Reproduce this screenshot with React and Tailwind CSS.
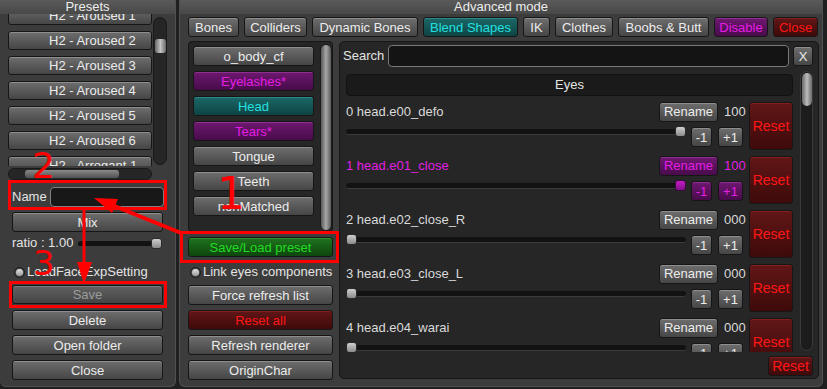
import React from 'react';

const tones = {
  gray: 'from-[#6e6e6e] to-[#464646] text-[#ececec] shadow-[inset_0_1px_0_#8e8e8e]',
  dim: 'from-[#626262] to-[#444444] text-[#9c9c9c] shadow-[inset_0_1px_0_#7c7c7c]',
  purple: 'from-[#6e1870] to-[#480c4a] text-[#e41ee4] shadow-[inset_0_1px_0_#8e3090]',
  teal: 'from-[#1c6868] to-[#0e4444] text-[#22e0e0] shadow-[inset_0_1px_0_#2e8888]',
  green: 'from-[#1e741e] to-[#0e460e] text-[#22dc22] shadow-[inset_0_1px_0_#2e942e]',
  red: 'from-[#621616] to-[#3e0a0a] text-[#ff1616] shadow-[inset_0_1px_0_#842020]',
};

function Btn({ children, tone = 'gray', className = '' }) {
  return (
    <div
      className={`flex items-center justify-center shrink-0 rounded-[3px] border border-[#161616] bg-linear-to-b leading-none whitespace-nowrap ${tones[tone]} ${className}`}
    >
      {children}
    </div>
  );
}

function Toggle({ label, className = '' }) {
  return (
    <div className={`flex items-center text-[#e4e4e4] ${className}`}>
      <div className="w-[11px] h-[11px] rounded-full border border-[#1a1a1a] bg-[#4a4a4a] flex items-center justify-center mr-[2px]">
        <div className="w-[7px] h-[7px] rounded-full bg-linear-to-b from-[#e4e4e4] to-[#9a9a9a]" />
      </div>
      <span>{label}</span>
    </div>
  );
}

function Slider({ value, tone = 'gray', className = '' }) {
  const thumb = tone === 'purple'
    ? 'from-[#c21ec4] to-[#86108a] border-[#3a0a3a]'
    : 'from-[#cfcfcf] to-[#8a8a8a] border-[#2a2a2a]';
  return (
    <div className={`relative h-[11px] ${className}`}>
      <div className="absolute left-0 right-0 top-[3px] h-[6px] rounded-full bg-[#121212] border-b border-[#3c3c3c]" />
      <div
        className={`absolute top-0 w-[11px] h-[11px] rounded-[3px] border bg-linear-to-b ${thumb}`}
        style={{ left: value ? 'calc(100% - 11px)' : 0 }}
      />
    </div>
  );
}

const presets = [
  'H2 - Aroused 1',
  'H2 - Aroused 2',
  'H2 - Aroused 3',
  'H2 - Aroused 4',
  'H2 - Aroused 5',
  'H2 - Aroused 6',
  'H2 - Arrogant 1',
];

function PresetsWindow() {
  return (
    <div className="w-[176px] h-[387px] shrink-0 bg-[#3c3c3c] rounded-b-[6px] border-r border-b border-[#505050] flex flex-col">
      <div className="h-[14px] leading-[14px] text-center text-[#ececec] bg-linear-to-b from-[#5a5a5a] to-[#484848]">Presets</div>

      {/* preset list */}
      <div className="h-[152px] flex pl-[8px] gap-[1px]">
        <div className="w-[144px] overflow-hidden">
          <div className="mt-[-8px] flex flex-col gap-[6px]">
            {presets.map((p) => (
              <Btn key={p} className="h-[19px] justify-start pl-[40px]">{p}</Btn>
            ))}
          </div>
        </div>
        <div className="w-[14px] h-[148px] mt-[3px] rounded-full bg-[#262626] border border-[#1a1a1a] pt-[21px] flex justify-center">
          <div className="w-[11px] h-[14px] rounded-[3px] bg-linear-to-r from-[#6a6a6a] via-[#c4c4c4] to-[#6a6a6a]" />
        </div>
      </div>

      {/* horizontal scrollbar */}
      <div className="mt-[2px] ml-[8px] w-[144px] h-[12px] rounded-full bg-[#262626] border border-[#1a1a1a] flex items-center pl-[16px]">
        <div className="w-[94px] h-[8px] rounded-[3px] bg-linear-to-b from-[#8a8a8a] to-[#505050]" />
      </div>

      <div className="mt-[7px] h-[20px] flex items-center pl-[12px]">
        <span className="w-[38px] text-[#e4e4e4]">Name</span>
        <div className="w-[114px] h-[20px] rounded-[4px] bg-[#181818] border border-[#808080]" />
      </div>

      <Btn className="mt-[5px] mx-[12px] h-[20px]">Mix</Btn>

      <div className="mt-[4px] h-[14px] flex items-center pl-[12px] pr-[13px] text-[#e4e4e4]">
        <span className="w-[66px]">ratio : 1.00</span>
        <Slider value={1} className="flex-1" />
      </div>

      <Toggle label="LoadFaceExpSetting" className="mt-[14px] h-[16px] pl-[14px]" />

      <Btn tone="dim" className="mt-[5px] mx-[12px] h-[19px]">Save</Btn>
      <Btn className="mt-[6px] mx-[12px] h-[20px]">Delete</Btn>
      <Btn className="mt-[5px] mx-[12px] h-[20px]">Open folder</Btn>
      <Btn className="mt-[5px] mx-[12px] h-[20px]">Close</Btn>
    </div>
  );
}

const tabs = [
  { label: 'Bones', w: 'w-[51px]' },
  { label: 'Colliders', w: 'w-[63px]' },
  { label: 'Dynamic Bones', w: 'w-[106px]' },
  { label: 'Blend Shapes', w: 'w-[95px]', tone: 'teal' },
  { label: 'IK', w: 'w-[27px]' },
  { label: 'Clothes', w: 'w-[58px]' },
  { label: 'Boobs & Butt', w: 'w-[91px]' },
  { label: 'Disable', w: 'w-[54px]', tone: 'purple' },
  { label: 'Close', w: 'w-[45px]', tone: 'red' },
];

const renderers = [
  { label: 'o_body_cf' },
  { label: 'Eyelashes*', tone: 'purple' },
  { label: 'Head', tone: 'teal' },
  { label: 'Tears*', tone: 'purple' },
  { label: 'Tongue' },
  { label: 'Teeth' },
  { label: 'nonMatched' },
];

const shapes = [
  { name: '0 head.e00_defo', value: '100', on: true },
  { name: '1 head.e01_close', value: '100', on: true, active: true },
  { name: '2 head.e02_close_R', value: '000' },
  { name: '3 head.e03_close_L', value: '000' },
  { name: '4 head.e04_warai', value: '000' },
];

function ShapeRow({ shape }) {
  const tone = shape.active ? 'purple' : 'gray';
  const text = shape.active ? 'text-[#e21ee2]' : 'text-[#dadada]';
  return (
    <div className="h-[48px] flex gap-[6px] shrink-0">
      <div className="w-[397px] flex flex-col">
        <div className="h-[19px] flex items-center">
          <span className={`flex-1 ${text}`}>{shape.name}</span>
          <Btn tone={tone} className="w-[59px] h-[20px]">Rename</Btn>
          <span className={`ml-[6px] w-[19px] ${text}`}>{shape.value}</span>
        </div>
        <div className="mt-[5px] flex items-start">
          <Slider value={shape.on ? 1 : 0} tone={tone} className="w-[340px]" />
          <Btn tone={tone} className="ml-[5px] mt-[1px] w-[21px] h-[20px]">-1</Btn>
          <Btn tone={tone} className="ml-[6px] mt-[1px] w-[25px] h-[20px]">+1</Btn>
        </div>
      </div>
      <Btn tone="red" className="w-[44px] h-[48px] text-[14px]">Reset</Btn>
    </div>
  );
}

function AdvancedWindow() {
  return (
    <div className="w-[644px] h-[387px] shrink-0 bg-[#3c3c3c] rounded-b-[6px] border-x border-b border-[#505050] flex flex-col">
      <div className="h-[14px] leading-[14px] text-center text-[#ececec] bg-linear-to-b from-[#5a5a5a] to-[#484848]">Advanced mode</div>

      <div className="mt-[3px] pl-[8px] flex gap-[5px]">
        {tabs.map((t) => (
          <Btn key={t.label} tone={t.tone} className={`${t.w} h-[20px]`}>{t.label}</Btn>
        ))}
      </div>

      <div className="mt-[4px] pl-[8px] flex gap-[6px]">
        {/* left column */}
        <div className="w-[145px] flex flex-col">
          <div className="h-[191px] rounded-[4px] bg-[#262626] border border-[#161616] flex pl-[4px] pt-[4px]">
            <div className="w-[121px] flex flex-col gap-[5px]">
              {renderers.map((r) => (
                <Btn key={r.label} tone={r.tone} className="h-[20px]">{r.label}</Btn>
              ))}
            </div>
            <div className="ml-[6px] mt-[-2px] w-[12px] h-[187px] rounded-full bg-linear-to-r from-[#5a5a5a] via-[#a8a8a8] to-[#5a5a5a] border border-[#1a1a1a]" />
          </div>
          <Btn tone="green" className="mt-[5px] h-[20px]">Save/Load preset</Btn>
          <Toggle label="Link eyes components" className="mt-[7px] h-[16px] pl-[2px]" />
          <Btn className="mt-[5px] h-[20px]">Force refresh list</Btn>
          <Btn tone="red" className="mt-[5px] h-[20px]">Reset all</Btn>
          <Btn className="mt-[5px] h-[20px]">Refresh renderer</Btn>
          <Btn className="mt-[5px] h-[20px]">OriginChar</Btn>
        </div>

        {/* blend shape panel */}
        <div className="w-[480px] h-[338px] rounded-[5px] bg-[#262626] border border-[#161616] flex flex-col">
          <div className="mt-[3px] h-[22px] flex items-center pl-[3px]">
            <span className="w-[45px] text-[#e4e4e4]">Search</span>
            <div className="w-[401px] h-[22px] rounded-[4px] bg-[#141414] border border-[#7a7a7a]" />
            <Btn className="ml-[4px] w-[20px] h-[20px]">X</Btn>
          </div>

          <div className="mt-[4px] flex pl-[6px]">
            <div className="w-[447px] flex flex-col">
              <div className="mt-[3px] h-[22px] rounded-[4px] bg-[#1a1a1a] border border-[#121212] flex items-center justify-center text-[#e4e4e4]">
                Eyes
              </div>
              <div className="mt-[3px] h-[253px] overflow-hidden flex flex-col gap-[6px] pt-[3px]">
                {shapes.map((s) => (
                  <ShapeRow key={s.name} shape={s} />
                ))}
              </div>
            </div>
            <div className="ml-[7px] w-[13px] h-[280px] rounded-full bg-[#1c1c1c] border border-[#3a3a3a] pt-[1px] flex justify-center">
              <div className="w-[10px] h-[33px] rounded-full bg-linear-to-r from-[#6a6a6a] via-[#bcbcbc] to-[#6a6a6a]" />
            </div>
          </div>

          <div className="mt-[4px] flex justify-end pr-[5px]">
            <Btn tone="red" className="w-[45px] h-[20px] text-[14px]">Reset</Btn>
          </div>
        </div>
      </div>
    </div>
  );
}

function Annotations() {
  return (
    <div className="absolute inset-0 pointer-events-none">
      <div className="absolute left-[8px] top-[180px] w-[159px] h-[30px] border-[3px] border-[#ff0000]" />
      <div className="absolute left-[180px] top-[231px] w-[159px] h-[32px] border-[3px] border-[#ff0000]" />
      <div className="absolute left-[9px] top-[281px] w-[158px] h-[27px] border-[3px] border-[#ff0000]" />

      <svg className="absolute inset-0" width="827" height="389">
        <line x1="181" y1="233" x2="112" y2="205" stroke="#ff0000" strokeWidth="4" />
        <polygon points="94,198 118,199 112,213" fill="#ff0000" />
        <line x1="84" y1="210" x2="84" y2="264" stroke="#ff0000" strokeWidth="3" />
        <polygon points="77,262 92,262 84,284" fill="#ff0000" />
      </svg>

      <div className="absolute left-[217px] top-[172px] text-[44px] leading-none text-[#ff0000] font-['DejaVu_Sans',sans-serif]">1</div>
      <div className="absolute left-[32px] top-[148px] text-[36px] leading-none text-[#ff0000] font-['DejaVu_Sans',sans-serif]">2</div>
      <div className="absolute left-[33px] top-[246px] text-[34px] leading-none text-[#ff0000] font-['DejaVu_Sans',sans-serif]">3</div>
    </div>
  );
}

export default function App() {
  return (
    <div className="relative w-[827px] h-[389px] overflow-hidden bg-[#202020] flex gap-[3px] text-[13px] font-['Liberation_Sans',Arial,sans-serif]">
      <PresetsWindow />
      <AdvancedWindow />
      <Annotations />
    </div>
  );
}
